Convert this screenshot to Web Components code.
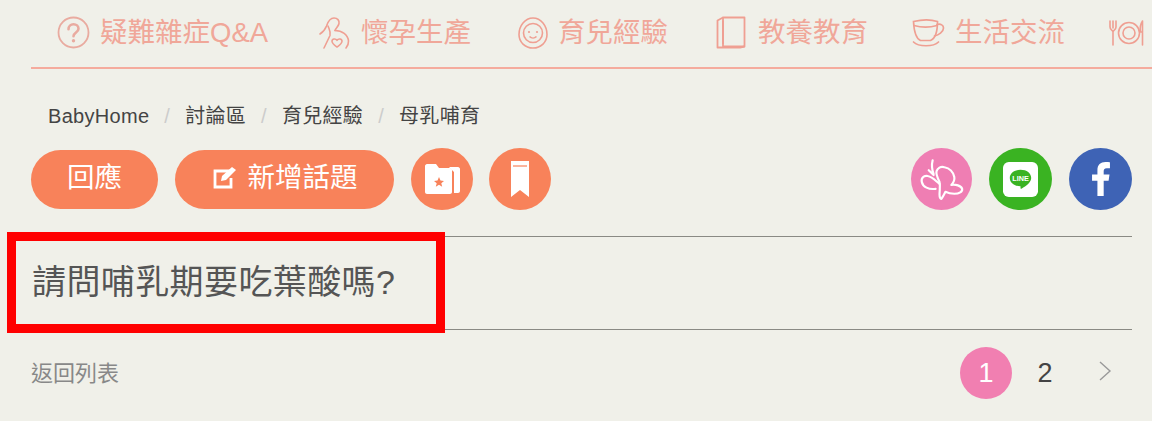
<!DOCTYPE html>
<html lang="zh-Hant"><head><meta charset="utf-8">
<style>
html,body{margin:0;padding:0;background:#f0f0e9;overflow:hidden;width:1152px;height:421px}
body{font-family:"Liberation Sans","Noto Sans CJK TC",sans-serif}
</style></head><body>
<bh-page></bh-page>
<script>
const S={
q:`<svg width="33" height="33" viewBox="0 0 33 33" fill="none" stroke="#e9aba0" stroke-width="1.800"><circle cx="16.500" cy="16.500" r="15"/><path d="M11.500 13.200c0-3 2.200-5 5-5s5 2 5 4.600c0 3.700-5 3.700-5 7.400" stroke-width="2.600" stroke-linecap="round"/><circle cx="16.500" cy="24.700" r="1.700" fill="#e9aba0" stroke="none"/></svg>`,
mom:`<svg width="34" height="34" viewBox="0 0 34 34" fill="none" stroke="#ef9f92" stroke-width="1.600" stroke-linecap="round" stroke-linejoin="round"><path d="M3 18c3-2 5-4 6.500-8C11 5.500 13 2 17 2c3.500 0 5.500 2.500 5 5.500-.4 2.700-3 4.500-4 7"/><path d="M11 10c1.500 4 3 6 2 9.500L7 32"/><path d="M18 14.500c7 0 13 4 13.500 10.500.2 2.500-1 5-2.500 7"/><path d="M20 31c-2.500-1.800-5-3.500-5-5.800 0-2.600 3.700-3 5-.8 1.300-2.200 5-1.800 5 .8 0 2.300-2.500 4-5 5.800z"/></svg>`,
baby:`<svg width="30" height="32" viewBox="0 0 30 32" fill="none" stroke="#ef9f92" stroke-width="1.600"><path d="M15 1C7 1 1 9 1 17.500 1 25 7 31 15 31s14-6 14-13.500C29 9 23 1 15 1z"/><circle cx="15" cy="16" r="9.500"/><circle cx="11" cy="15" r="1.100" fill="#ef9f92" stroke="none"/><circle cx="19" cy="15" r="1.100" fill="#ef9f92" stroke="none"/><path d="M11.500 19.500c2 2 5 2 7 0"/></svg>`,
book:`<svg width="30" height="33" viewBox="0 0 30 33" fill="none" stroke="#ef9f92" stroke-width="1.800" stroke-linejoin="round"><path d="M7 1.500h21.500v29H7z"/><path d="M7 1.500 1.500 4.500V31.500H24l4.500-1"/><path d="M7 4.500V28"/></svg>`,
cup:`<svg width="33" height="30" viewBox="0 0 33 30" fill="none" stroke="#ef9f92" stroke-width="1.700" stroke-linecap="round"><path d="M1.500 3.500c8-2 18-2 24 0 0 10-2 17-7 19H8.500C4 20.500 2 13 1.500 3.500z"/><path d="M25 6.500c4-1 6.500.8 6.500 3.500 0 4-5 7-9 8"/><path d="M1.500 24c5 5 20 5 25 0"/><path d="M2 7.500c7 2 16 2 23 0"/></svg>`,
dish:`<svg width="36" height="28" viewBox="0 0 36 28" fill="none" stroke="#ef9f92" stroke-width="1.600" stroke-linecap="round"><path d="M1 2v6c0 3 3 3 3 5v13M4 2v7M7 2v6c0 3-3 3-3 5"/><circle cx="20" cy="14" r="10.500"/><circle cx="20" cy="14" r="6"/><path d="M33.500 2v24M33.500 2c-2 3-2.500 8-2 11h2"/></svg>`
};
function def(name,html){customElements.define(name,class extends HTMLElement{constructor(){super();this.attachShadow({mode:'open'}).innerHTML=html(this);}})}

def('bh-nav-item',el=>`<style>:host{display:flex;align-items:center;flex:none;gap:var(--g,10px);color:#f0a799;font-size:27.500px;line-height:1;white-space:nowrap}
svg{display:block}</style>${S[el.getAttribute('icon')]}<slot></slot>`);

def('bh-nav',()=>`<style>:host{display:flex;align-items:center;gap:48px;height:67px;padding:0 0 2px 57px;box-sizing:border-box;overflow:hidden}
</style><slot></slot>`);

def('bh-crumbs',()=>`<style>:host{display:flex;align-items:center;height:32px;margin-left:17px;font-size:20px;letter-spacing:.3px;color:#444;gap:15px;line-height:1}
::slotted(i){font-style:normal;color:#ccc}</style><slot></slot>`);

def('bh-btn',()=>`<style>:host{display:flex;align-items:center;justify-content:center;gap:10px;height:59px;padding-bottom:3px;border-radius:30px;background:#f8825a;color:#fff;font-size:27.500px;flex:none;box-sizing:border-box;margin-top:1px;line-height:1}</style><slot></slot>`);

def('bh-round',el=>`<style>:host{display:flex;align-items:center;justify-content:center;width:62px;height:62px;border-radius:50%;background:${el.getAttribute('bg')};flex:none}svg{display:block}</style><slot></slot>`);

def('bh-title',()=>`<style>:host{display:block;margin-top:24px;height:92px;border-top:1px solid #8a8a84;border-bottom:1px solid #8a8a84}
h1{margin:0 0 0 1px;font-weight:400;font-size:34px;letter-spacing:.4px;line-height:90px;color:#555;font-family:"Liberation Sans","Noto Sans CJK TC",sans-serif}</style><h1><slot></slot></h1>`);

def('bh-pager',()=>`<style>:host{display:flex;align-items:center;height:86px;justify-content:space-between}
.l{color:#888;font-size:22px;line-height:1;margin-top:1px}
.r{display:flex;align-items:center}
.on{width:52px;height:52px;border-radius:50%;background:#f17fb1;color:#fff;display:flex;align-items:center;justify-content:center;font-size:27px}
.n{width:66px;text-align:center;color:#444;font-size:27px}
svg{display:block;margin:-4px 20px 0 20px}</style>
<span class="l"><slot></slot></span><div class="r"><span class="on">1</span><span class="n">2</span>
<svg width="14" height="20" viewBox="0 0 14 20" fill="none" stroke="#999" stroke-width="1.400"><path d="M2 1l10 9-10 9"/></svg></div>`);

def('bh-mark',()=>`<style>:host{position:absolute;left:7px;top:232px;width:438px;height:101px;box-sizing:border-box;border:9px solid #f00}</style>`);

def('bh-page',()=>`<style>:host{display:block;position:relative;width:1152px;height:421px;box-sizing:border-box}
.w{padding:0 20px 0 31px}
.hr{height:2px;background:#f5ab9d;margin-left:31px}
.row{display:flex;align-items:center;gap:17px;height:66px;margin-top:14px}
.sp{flex:1}
.soc{display:flex;gap:17px}
.a{width:127px}.b{width:219px}
.tight{margin-left:-1px}
svg{display:block}
</style>
<bh-nav>
<bh-nav-item icon="q">疑難雜症Q&amp;A</bh-nav-item>
<bh-nav-item icon="mom" style="margin-left:1px">懷孕生產</bh-nav-item>
<bh-nav-item icon="baby" style="margin-left:-1px">育兒經驗</bh-nav-item>
<bh-nav-item icon="book" style="--g:12px">教養教育</bh-nav-item>
<bh-nav-item icon="cup" style="margin-left:-4px">生活交流</bh-nav-item>
<bh-nav-item icon="dish" style="margin-left:-4px;--g:0px"></bh-nav-item>
</bh-nav>
<div class="hr"></div>
<div class="w">
<bh-crumbs style="margin-top:31px"><span>BabyHome</span><i>/</i><span>討論區</span><i>/</i><span>育兒經驗</span><i>/</i><span>母乳哺育</span></bh-crumbs>
<div class="row">
<bh-btn class="a">回應</bh-btn>
<bh-btn class="b"><svg width="26" height="24" viewBox="0 0 26 24" fill="none"><path d="M19 5H3v16h16v-9" stroke="#fff" stroke-width="2.800"/><path d="M9 15l1-5L20 1l4 3-10 10z" fill="#fff"/></svg>新增話題</bh-btn>
<bh-round bg="#f8825a"><svg width="35" height="30" viewBox="0 0 35 30"><path d="M24 3h9c1 0 2 1 2 2v22c0 1-1 2-2 2h-4V8z" fill="#fff"/><path d="M0 2C0 1 1 0 2 0h9l3 4h11c1 0 2 1 2 2v22c0 1-1 2-2 2H2c-1 0-2-1-2-2z" fill="#fff"/><path d="M14 13l1.500 3.600 3.500.3-2.700 2.300.9 3.600-3.200-2-3.200 2 .9-3.600L9 16.900l3.500-.3z" fill="#f8825a"/></svg></bh-round>
<bh-round class="tight" bg="#f8825a"><svg width="18" height="36" viewBox="0 0 18 36"><path d="M0 0h18v36l-9-7-9 7z" fill="#fff"/><path d="M2 5h14" stroke="#f8825a" stroke-width="1.200"/></svg></bh-round>
<span class="sp"></span>
<div class="soc">
<bh-round style="width:61px" bg="#ef7eb3"><svg width="61" height="62" viewBox="0 0 62 62" fill="none" stroke="#fff" stroke-width="2.200" stroke-linejoin="round" stroke-linecap="round"><path d="M29 34c-2-4-4-8-3-11 1-3 4-5 8-4 5 1 9 5 10 10 .5 3-1 6-3 8 4-1 10 1 11 4 .5 3-3 5-8 5-4 0-7-1-9-2-1 2-3 6-4 7-1 .5-2-1-2-4 0-5 1-9 0-13z"/><path d="M29 36c-4-3-7-7-12-8-4-1-7 2-6 6 1 5 7 8 14 7"/><path d="M22 12c-1 4-1 9 1 14M18 22l5 5"/></svg></bh-round>
<bh-round style="width:63px" bg="#3ab322"><svg width="35" height="35" viewBox="0 0 36 36"><rect width="36" height="36" rx="6" fill="#fff"/><path d="M18 8c6.500 0 11 3.500 11 8.500 0 4.500-5 8-10 11-1 .5-1-.5-1-2.500-6 0-11-3.500-11-8.500S11.500 8 18 8z" fill="#3ab322"/><text x="18" y="19.500" text-anchor="middle" font-family="Liberation Sans" font-size="7.500" font-weight="700" fill="#fff">LINE</text></svg></bh-round>
<bh-round style="width:63px" bg="#3e63b5"><svg width="18" height="34" viewBox="0 0 20 38"><path d="M6 38V21H0v-7h6V9c0-6 3.500-9 9-9 2.500 0 4 .2 5 .3V7h-3.500C13.500 7 13 8.500 13 10.500V14h6.500l-1 7H13v17z" fill="#fff"/></svg></bh-round>
</div>
</div>
<bh-title>請問哺乳期要吃葉酸嗎?</bh-title>
<bh-pager>返回列表</bh-pager>
</div>
<bh-mark></bh-mark>`);
</script>
</body></html>
